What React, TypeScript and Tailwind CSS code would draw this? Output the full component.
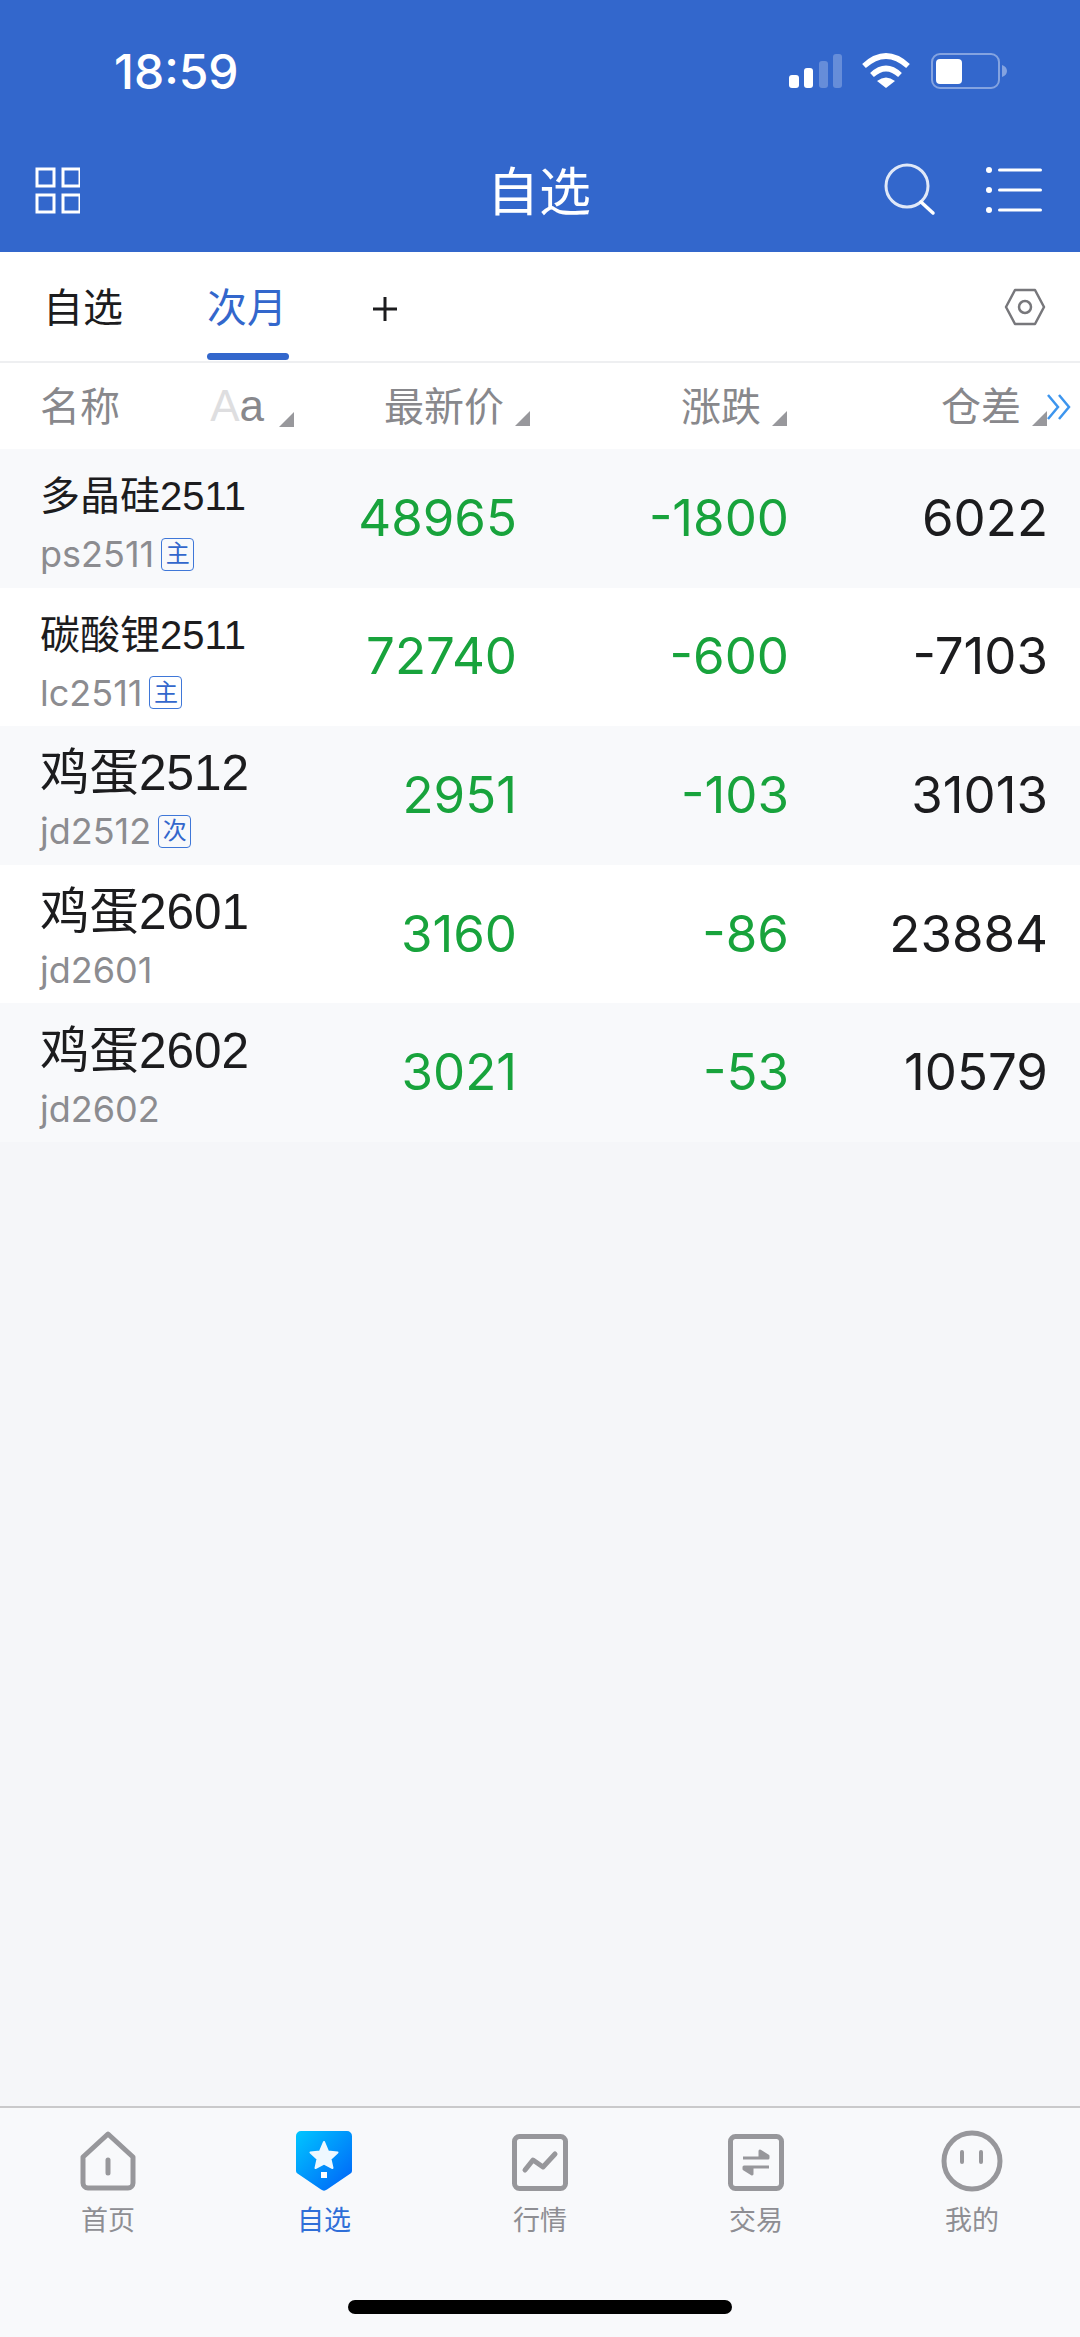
const SANS = "font-['Inter','Noto_Sans_CJK_SC',sans-serif]";
const NAME_FONT = "font-['Liberation_Sans','Noto_Sans_CJK_SC',sans-serif]";

interface RowData {
  name: string;
  code: string;
  badge?: string;
  price: string;
  change: string;
  diff: string;
  big?: boolean;
}

const rows: RowData[] = [
  { name: "多晶硅2511", code: "ps2511", badge: "主", price: "48965", change: "-1800", diff: "6022" },
  { name: "碳酸锂2511", code: "lc2511", badge: "主", price: "72740", change: "-600", diff: "-7103" },
  { name: "鸡蛋2512", code: "jd2512", badge: "次", price: "2951", change: "-103", diff: "31013", big: true },
  { name: "鸡蛋2601", code: "jd2601", price: "3160", change: "-86", diff: "23884", big: true },
  { name: "鸡蛋2602", code: "jd2602", price: "3021", change: "-53", diff: "10579", big: true },
];

function SortMark() {
  return (
    <svg width="15" height="15" viewBox="0 0 15 15" className="ml-[11px] mb-[1px] shrink-0 self-end">
      <path d="M15 0V15H0Z" fill="#98989c" />
    </svg>
  );
}

function StatusIcons() {
  return (
    <div className="flex items-center">
      <svg width="54" height="36" viewBox="0 0 54 36">
        <rect x="0" y="22" width="10" height="13" rx="3" fill="#fff" />
        <rect x="15" y="15" width="9" height="20" rx="3" fill="#fff" />
        <rect x="30" y="8" width="9" height="27" rx="3" fill="#fff" fillOpacity=".25" />
        <rect x="44" y="1" width="9" height="34" rx="3" fill="#fff" fillOpacity=".25" />
      </svg>
      <svg width="48" height="36" viewBox="0 0 48 36" className="ml-[19px]">
        <path d="M2 13Q24 -7 46 13" fill="none" stroke="#fff" strokeWidth="5.5" />
        <path d="M10 22Q24 9 38 22" fill="none" stroke="#fff" strokeWidth="5.5" />
        <path d="M24 35L15 28Q24 21 33 28Z" fill="#fff" />
      </svg>
      <div className="ml-[21px] flex h-[36px] w-[69px] items-center rounded-[9px] border-[2.5px] border-white/40 pl-[3px]">
        <div className="h-[25px] w-[26px] rounded-[4px] bg-white" />
      </div>
      <svg width="5" height="12" viewBox="0 0 5 12" className="ml-[2px]">
        <path d="M0 0C3 1 5 3 5 6S3 11 0 12Z" fill="#fff" fillOpacity=".4" />
      </svg>
    </div>
  );
}

function TopBar() {
  return (
    <div className="bg-[#3367cc] text-white">
      <div className="flex h-[128px] items-start justify-between pl-[114px] pr-[73px] pt-[44px]">
        <span className="font-['Inter',sans-serif] text-[48px] font-medium leading-[56px]">18:59</span>
        <div className="pt-[9px]">
          <StatusIcons />
        </div>
      </div>
      <div className="grid h-[124px] grid-cols-[1fr_auto_1fr] items-center pl-[34px] pr-[36px]">
        <svg width="46" height="47" viewBox="0 0 46 47" fill="none" stroke="#fff" strokeWidth="3">
          <rect x="3" y="2" width="17" height="17" />
          <rect x="29" y="2" width="17" height="17" />
          <rect x="3" y="28" width="17" height="17" />
          <rect x="29" y="28" width="17" height="17" />
        </svg>
        <span className={`${SANS} pt-[5px] text-[52px] leading-none`}>自选</span>
        <div className="flex items-center justify-end">
          <svg width="52" height="54" viewBox="0 0 52 54" fill="none" stroke="#fff" strokeLinecap="round">
            <circle cx="23" cy="23" r="21" strokeWidth="3" strokeOpacity=".85" />
            <path d="M37 39L49 50" strokeWidth="3.5" />
          </svg>
          <svg width="58" height="48" viewBox="0 0 58 48" fill="#fff" className="ml-[50px]">
            <circle cx="3" cy="4" r="3" />
            <circle cx="3" cy="24" r="3" />
            <circle cx="3" cy="44" r="3" />
            <rect x="12" y="2.5" width="44" height="3" rx="1.5" />
            <rect x="12" y="22.5" width="44" height="3" rx="1.5" />
            <rect x="12" y="42.5" width="44" height="3" rx="1.5" />
          </svg>
        </div>
      </div>
    </div>
  );
}

function Tabs() {
  return (
    <div className={`${SANS} flex h-[111px] items-center border-b-2 border-[#eeeff1] bg-white pl-[43px] pr-[34px]`}>
      <span className="pt-[3px] text-[40px] leading-none text-[#1c1c1e]">自选</span>
      <div className="relative ml-[84px] flex h-full items-center">
        <span className="pt-[3px] text-[40px] leading-none text-[#3367cc]">次月</span>
        <div className="absolute bottom-[1px] left-0 h-[7px] w-[82px] rounded-full bg-[#3367cc]" />
      </div>
      <svg width="24" height="24" viewBox="0 0 24 24" className="ml-[86px] mt-[4px]" stroke="#1c1c1e" strokeWidth="3">
        <path d="M12 0V24M0 12H24" />
      </svg>
      <svg width="42" height="38" viewBox="0 0 42 38" fill="none" stroke="#77777b" strokeWidth="2.5" className="ml-auto">
        <path d="M11 2H31L40 19L31 36H11L2 19Z" strokeLinejoin="round" />
        <circle cx="21" cy="19" r="6" />
      </svg>
    </div>
  );
}

function TableHeader() {
  return (
    <div className={`${SANS} relative flex h-[86px] items-center bg-white pl-[40px] text-[40px] leading-none text-[#88888c]`}>
      <div className="flex w-[254px] items-center justify-between">
        <span className="pt-[2px]">名称</span>
        <div className="flex items-center">
          <span className="pr-[4px] font-['Liberation_Sans',sans-serif] text-[44px]">
            <span className="text-[#dedee0]">A</span>a
          </span>
          <SortMark />
        </div>
      </div>
      <div className="flex w-[236px] items-center justify-end">
        <span className="pt-[2px]">最新价</span>
        <SortMark />
      </div>
      <div className="flex w-[257px] items-center justify-end">
        <span className="pt-[2px]">涨跌</span>
        <SortMark />
      </div>
      <div className="flex w-[260px] items-center justify-end">
        <span className="pt-[2px]">仓差</span>
        <SortMark />
      </div>
      <svg width="26" height="26" viewBox="0 0 26 26" fill="none" stroke="#3d95ee" strokeWidth="2.5" className="absolute right-[8px] top-[31px]">
        <path d="M2 1L12 13L2 25M13 1L23 13L13 25" />
      </svg>
    </div>
  );
}

function Row({ row, odd }: { row: RowData; odd: boolean }) {
  return (
    <div className={`${SANS} flex h-[138.6px] items-center pl-[40px] pr-[31px] ${odd ? "bg-[#f8f9fb]" : "bg-white"}`}>
      <div className="flex w-[302px] flex-col pt-[4px]">
        <div className={`${NAME_FONT} whitespace-nowrap text-[#1c1c1e] ${row.big ? "h-[60px] text-[49.5px] leading-[60px]" : "h-[60px] text-[40px] leading-[60px]"}`}>
          {row.name}
        </div>
        <div className="mt-[8px] flex h-[40px] items-center text-[36px] leading-none text-[#8c8c90]">
          <span>{row.code}</span>
          {row.badge && (
            <span className="ml-[7px] flex h-[33px] w-[33px] items-center justify-center rounded-[4px] border-[1.5px] border-[#3f77d8] text-[24px] leading-none text-[#3367cc]">
              {row.badge}
            </span>
          )}
        </div>
      </div>
      <div className="mb-[2px] w-[175px] text-right text-[51px] leading-none text-[#18a33c]">{row.price}</div>
      <div className="mb-[2px] w-[272px] text-right text-[51px] leading-none text-[#18a33c]">{row.change}</div>
      <div className="mb-[2px] w-[259px] text-right text-[51px] leading-none text-[#1c1c1e]">{row.diff}</div>
    </div>
  );
}

const GRAY = "#97979b";

function HomeIcon() {
  return (
    <svg width="56" height="60" viewBox="0 0 56 60" fill="none" stroke={GRAY} strokeWidth="5" strokeLinejoin="round" strokeLinecap="round">
      <path d="M28 3L53 26V52A5 5 0 0 1 48 57H8A5 5 0 0 1 3 52V26Z" />
      <path d="M28 29V42" />
    </svg>
  );
}

function WatchIcon() {
  return (
    <svg width="56" height="60" viewBox="0 0 56 60">
      <defs>
        <linearGradient id="shield" x1="0" y1="0" x2="1" y2="1">
          <stop offset="0" stopColor="#00c6ff" />
          <stop offset="1" stopColor="#0060f8" />
        </linearGradient>
      </defs>
      <path d="M5 0H51A5 5 0 0 1 56 5V40A3 3 0 0 1 54.500 42.500L31 58.500A5 5 0 0 1 25 58.500L1.500 42.500A3 3 0 0 1 0 40V5A5 5 0 0 1 5 0Z" fill="url(#shield)" />
      <path d="M28 11L32 20.500L41.500 21.500L34.500 28L36.500 37L28 32.500L19.500 37L21.500 28L14.500 21.500L24 20.500Z" fill="#eef8ff" stroke="#eef8ff" strokeWidth="2" strokeLinejoin="round" />
      <rect x="25" y="41" width="6" height="6" fill="#fff" />
    </svg>
  );
}

function MarketIcon() {
  return (
    <svg width="56" height="60" viewBox="0 0 56 60" fill="none" stroke={GRAY} strokeWidth="5" strokeLinejoin="round" strokeLinecap="round">
      <rect x="2.500" y="5.500" width="51" height="52" rx="5" />
      <path d="M13 39L21 29L31 36L43 23" />
    </svg>
  );
}

function TradeIcon() {
  return (
    <svg width="56" height="60" viewBox="0 0 56 60" fill="none" stroke={GRAY} strokeWidth="5" strokeLinejoin="round">
      <rect x="2.500" y="5.500" width="51" height="52" rx="5" />
      <path d="M15 27H40V25L32 20V27" fill={GRAY} strokeWidth="3" />
      <path d="M41 36H16V38L24 43V36" fill={GRAY} strokeWidth="3" />
    </svg>
  );
}

function MineIcon() {
  return (
    <svg width="62" height="62" viewBox="0 0 62 62" fill="none" stroke={GRAY} strokeWidth="5" strokeLinecap="round">
      <circle cx="31" cy="31" r="28" />
      <path d="M21 22V32M40 22V32" strokeWidth="4" />
    </svg>
  );
}

const navItems = [
  { label: "首页", icon: <HomeIcon /> },
  { label: "自选", icon: <WatchIcon />, active: true },
  { label: "行情", icon: <MarketIcon /> },
  { label: "交易", icon: <TradeIcon /> },
  { label: "我的", icon: <MineIcon /> },
];

function BottomNav() {
  return (
    <div className={`${SANS} h-[231px] border-t-2 border-[#c9c9cb] bg-[#f8f9fb] pt-[22px]`}>
      <div className="grid grid-cols-5">
        {navItems.map((item) => (
          <div key={item.label} className="flex flex-col items-center">
            <div className="flex h-[62px] items-center justify-center">{item.icon}</div>
            <span className={`mt-[14px] text-[27px] leading-[30px] ${item.active ? "text-[#2f6fd8]" : "text-[#8e8e93]"}`}>
              {item.label}
            </span>
          </div>
        ))}
      </div>
      <div className="mx-auto mt-[64px] h-[14px] w-[384px] rounded-full bg-black" />
    </div>
  );
}

export default function App() {
  return (
    <div className="flex h-[2337px] w-[1080px] flex-col overflow-hidden bg-[#f5f6f9]">
      <TopBar />
      <Tabs />
      <TableHeader />
      <div>
        {rows.map((row, i) => (
          <Row key={row.code} row={row} odd={i % 2 === 0} />
        ))}
      </div>
      <div className="flex-1" />
      <BottomNav />
    </div>
  );
}
